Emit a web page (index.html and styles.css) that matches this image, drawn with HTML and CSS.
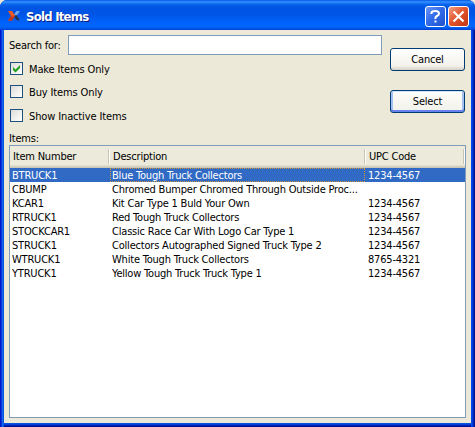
FILE: index.html
```html
<!DOCTYPE html>
<html lang="en">
<head>
<meta charset="utf-8">
<title>Sold Items</title>
<link rel="stylesheet" href="styles.css">
</head>
<body>
<div class="window">
  <header class="titlebar">
    <svg class="logo" width="12" height="12" viewBox="0 0 12 12" aria-hidden="true">
      <path d="M6 4.500 8.500 1 12 1 8.500 6z" fill="#6fa6e8"/>
      <path d="M6 6 8.500 5 12 10.500 8.500 10z" fill="#26314f"/>
      <path d="M0 1 4 1 7 5.500 4 10.500 0 10.500 3 6z" fill="#f0561d"/>
      <path d="M0 10.500 3 6.500 6.500 6.500 4 10.500z" fill="#c23218"/>
    </svg>
    <h1 class="title">Sold Items</h1>
    <button class="caption help" aria-label="Help">
      <svg width="19" height="19" viewBox="0 0 19 19"><path d="M5.500 7V5.500Q6 4 9.500 4T13 6.500Q13 8 11 9T9.500 12M9.500 13.500V15.500" fill="none" stroke="#fff" stroke-width="2"/></svg>
    </button>
    <button class="caption close" aria-label="Close">
      <svg width="19" height="19" viewBox="0 0 19 19"><path d="M4.500 4.500 14.500 14.500M14.500 4.500 4.500 14.500" fill="none" stroke="#fff" stroke-width="2.200"/></svg>
    </button>
  </header>
  <main class="body">
    <div class="top">
      <div class="filters">
        <div class="search"><label for="q">Search for:</label><input id="q" type="text"></div>
        <div class="check"><span class="box"><svg width="11" height="11" viewBox="0 0 11 11"><path d="M2 4v3l2.500 2.500L9 5V2L4.500 6.500z" fill="#21a121"/></svg></span><span class="text">Make Items Only</span></div>
        <div class="check"><span class="box"></span><span class="text">Buy Items Only</span></div>
        <div class="check last"><span class="box"></span><span class="text">Show Inactive Items</span></div>
      </div>
      <div class="actions">
        <button class="btn">Cancel</button>
        <button class="btn default">Select</button>
      </div>
    </div>
    <div class="list-label">Items:</div>
    <div class="list">
      <div class="head"><span>Item Number</span><span>Description</span><span>UPC Code</span></div>
      <div class="row selected"><span>BTRUCK1</span><span class="focus">Blue Tough Truck Collectors</span><span>1234-4567</span></div>
      <div class="row"><span>CBUMP</span><span>Chromed Bumper Chromed Through Outside Proc...</span><span></span></div>
      <div class="row"><span>KCAR1</span><span>Kit Car Type 1 Buld Your Own</span><span>1234-4567</span></div>
      <div class="row"><span>RTRUCK1</span><span>Red Tough Truck Collectors</span><span>1234-4567</span></div>
      <div class="row"><span>STOCKCAR1</span><span>Classic Race Car With Logo Car Type 1</span><span>1234-4567</span></div>
      <div class="row"><span>STRUCK1</span><span>Collectors Autographed Signed Truck Type 2</span><span>1234-4567</span></div>
      <div class="row"><span>WTRUCK1</span><span>White Tough Truck Collectors</span><span>8765-4321</span></div>
      <div class="row"><span>YTRUCK1</span><span>Yellow Tough Truck Truck Type 1</span><span>1234-4567</span></div>
    </div>
  </main>
</div>
</body>
</html>
```
FILE: styles.css
```css
* { box-sizing: border-box; }
body {
  margin: 0;
  background: #ece9d8;
  color: #000;
  font: 11px/14px "DejaVu Sans Condensed", "DejaVu Sans", sans-serif;
  font-stretch: condensed;
  letter-spacing: -0.2px;
}
button { font: inherit; letter-spacing: inherit; padding: 0; margin: 0; color: #000; }
.window {
  width: 475px;
  height: 427px;
  padding: 0 4px 4px;
  overflow: hidden;
  border-radius: 7px 7px 0 0;
  background: linear-gradient(90deg, #0019cf 0 1px, #0831d9 1px 2px, #166aee 2px 3px, #0855dd 3px 4px, transparent 4px 471px, #0048f0 471px 472px, #003ddc 472px 473px, #0024b8 473px 474px, #00138c 474px), linear-gradient(#0855dd 0 424px, #0441d8 424px 425px, #0020b8 425px 426px, #00138c 426px);
}
.titlebar {
  height: 30px;
  margin: 0 -4px;
  padding: 6px 6px 0 8px;
  display: flex;
  align-items: flex-start;
  background: linear-gradient(#0058e6 0, #3a93ff 2px, #1c78f5 3px, #0560ea 5px, #0054e3 8px, #0055e5 14px, #0060f8 21px, #0066ff 26px, #005bec 28px, #003dd7 30px);
}
.logo { margin-top: 4px; }
.title {
  flex: 1;
  margin: 3px 0 0 6px;
  color: #fff;
  font: bold 13px/16px "DejaVu Sans Condensed", "DejaVu Sans", sans-serif;
  letter-spacing: -0.75px;
  text-shadow: 1px 1px 0 #0a1883;
}
.caption {
  width: 21px;
  height: 21px;
  border: 1px solid #fff;
  border-radius: 3px;
  margin-left: 2px;
}
.caption svg { display: block; }
.help { background: linear-gradient(135deg, #6d96f4, #316bea 45%, #2052cc); }
.close { background: linear-gradient(135deg, #f0a088, #e4572f 45%, #bf3511); }
.body { height: 393px; padding: 5px 6px 0 5px; background: #ece9d8; }
.top { display: flex; justify-content: space-between; height: 96px; }
.search { display: flex; align-items: center; height: 20px; margin-bottom: 7px; }
.search label { width: 59px; padding-top: 1px; white-space: nowrap; }
.search input { width: 314px; height: 20px; border: 1px solid #7f9db9; background: #fff; }
.check { display: flex; align-items: center; height: 13px; margin: 0 0 10px 1px; gap: 6px; }
.check.last { margin-top: 11px; }
.text { padding-top: 2px; letter-spacing: -0.13px; }
.box { width: 13px; height: 13px; border: 1px solid #1c5180; background: linear-gradient(135deg, #dcdcd7, #fff); }
.box svg { display: block; }
.actions { padding-top: 13px; }
.btn {
  display: block;
  width: 75px;
  height: 23px;
  padding-top: 1px;
  margin-bottom: 19px;
  border: 1px solid #003c74;
  border-radius: 3px;
  background: linear-gradient(#fff, #f3f2ec 80%, #d6d0c5);
}
.btn.default { background: linear-gradient(#fdfdfb, #f2f1ea); box-shadow: inset 0 1px #cee7ff, inset 0 -2px #6982ee, inset 2px 0 #a5c1f2, inset -2px 0 #a5c1f2; }
.list-label { height: 14px; padding-top: 1px; }
.list { width: 457px; height: 273px; border: 1px solid #7f9db9; background: #fff; }
.head, .row { display: grid; grid-template-columns: 100px 255px 1fr; white-space: nowrap; }
.head {
  grid-template-columns: 100px 256px 99px;
  height: 22px;
  padding-top: 3px;
  background: linear-gradient(#ebeadb 0 19px, #e2decd 19px 20px, #d6d2c2 20px 21px, #cbc7b8 21px);
}
.head span { height: 15px; padding: 1px 0 0 3px; border-right: 1px solid #fff; box-shadow: inset -1px 0 #c7c5b2; }
.row { height: 14px; }
.row span { padding: 1px 0 0 2px; height: 14px; }
.row span:last-child { padding-left: 3px; }
.selected { background: #316ac5; color: #fff; }
.focus { outline: 1px dotted #ce953a; outline-offset: -1px; }
```
